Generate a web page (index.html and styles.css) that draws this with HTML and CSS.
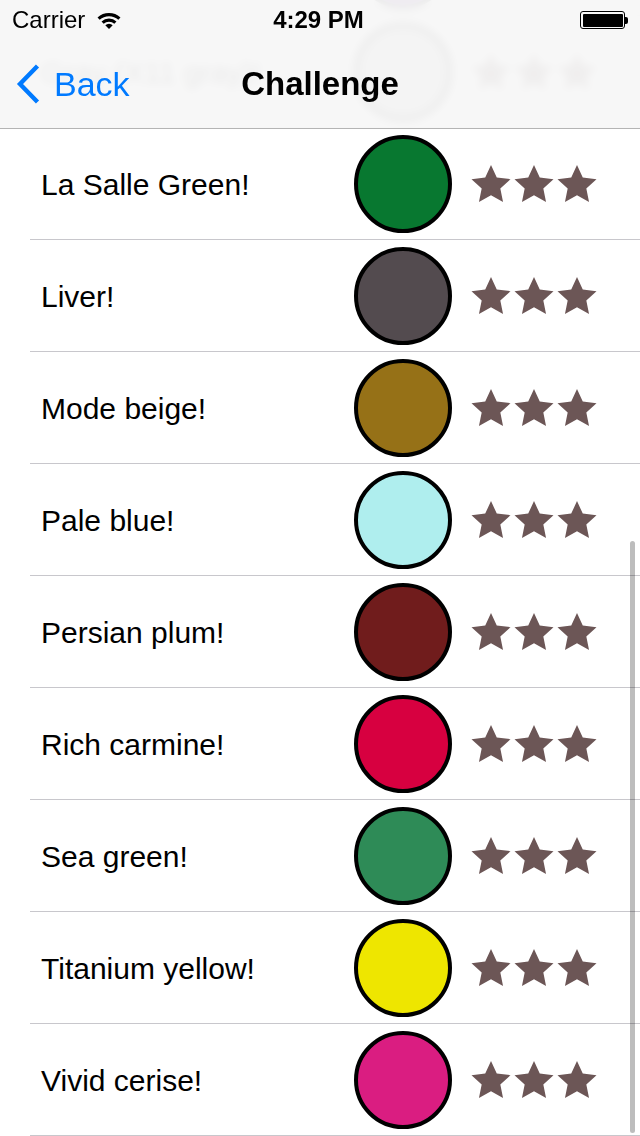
FILE: index.html
```html
<!DOCTYPE html>
<html>
<head>
<meta charset="utf-8">
<link rel="stylesheet" href="styles.css">
</head>
<body>
<svg class="defs" width="0" height="0">
  <symbol id="star" viewBox="0 0 40 38">
    <polygon points="20,0 25.76,12.57 39.5,14.17 29.32,23.53 32.05,37.08 20,30.3 7.95,37.08 10.68,23.53 0.5,14.17 14.24,12.57"/>
  </symbol>
</svg>
<div class="screen">
  <div class="list">
    <div class="row"><div class="row-inner"><span class="name"></span><span class="swatch" style="background:#6f2da8"></span><span class="stars"><svg class="star"><use href="#star"/></svg><svg class="star"><use href="#star"/></svg><svg class="star"><use href="#star"/></svg></span></div></div>
    <div class="row"><div class="row-inner"><span class="name">Gray (X11 gray)!</span><span class="swatch" style="background:#bebebe"></span><span class="stars"><svg class="star"><use href="#star"/></svg><svg class="star"><use href="#star"/></svg><svg class="star"><use href="#star"/></svg></span></div></div>
    <div class="row"><div class="row-inner"><span class="name">La Salle Green!</span><span class="swatch" style="background:#087830"></span><span class="stars"><svg class="star"><use href="#star"/></svg><svg class="star"><use href="#star"/></svg><svg class="star"><use href="#star"/></svg></span></div></div>
    <div class="row"><div class="row-inner"><span class="name">Liver!</span><span class="swatch" style="background:#534b4f"></span><span class="stars"><svg class="star"><use href="#star"/></svg><svg class="star"><use href="#star"/></svg><svg class="star"><use href="#star"/></svg></span></div></div>
    <div class="row"><div class="row-inner"><span class="name">Mode beige!</span><span class="swatch" style="background:#967117"></span><span class="stars"><svg class="star"><use href="#star"/></svg><svg class="star"><use href="#star"/></svg><svg class="star"><use href="#star"/></svg></span></div></div>
    <div class="row"><div class="row-inner"><span class="name">Pale blue!</span><span class="swatch" style="background:#afeeee"></span><span class="stars"><svg class="star"><use href="#star"/></svg><svg class="star"><use href="#star"/></svg><svg class="star"><use href="#star"/></svg></span></div></div>
    <div class="row"><div class="row-inner"><span class="name">Persian plum!</span><span class="swatch" style="background:#701c1c"></span><span class="stars"><svg class="star"><use href="#star"/></svg><svg class="star"><use href="#star"/></svg><svg class="star"><use href="#star"/></svg></span></div></div>
    <div class="row"><div class="row-inner"><span class="name">Rich carmine!</span><span class="swatch" style="background:#d70040"></span><span class="stars"><svg class="star"><use href="#star"/></svg><svg class="star"><use href="#star"/></svg><svg class="star"><use href="#star"/></svg></span></div></div>
    <div class="row"><div class="row-inner"><span class="name">Sea green!</span><span class="swatch" style="background:#2e8b57"></span><span class="stars"><svg class="star"><use href="#star"/></svg><svg class="star"><use href="#star"/></svg><svg class="star"><use href="#star"/></svg></span></div></div>
    <div class="row"><div class="row-inner"><span class="name">Titanium yellow!</span><span class="swatch" style="background:#eee600"></span><span class="stars"><svg class="star"><use href="#star"/></svg><svg class="star"><use href="#star"/></svg><svg class="star"><use href="#star"/></svg></span></div></div>
    <div class="row"><div class="row-inner"><span class="name">Vivid cerise!</span><span class="swatch" style="background:#da1d81"></span><span class="stars"><svg class="star"><use href="#star"/></svg><svg class="star"><use href="#star"/></svg><svg class="star"><use href="#star"/></svg></span></div></div>
  </div>

  <header class="topbar">
    <div class="status">
      <div class="status-left">
        <span class="carrier">Carrier</span>
        <svg class="wifi" width="24" height="17" viewBox="0 0 24 17">
          <path d="M1.6 6.6 A15.5 15.5 0 0 1 22.4 6.6" fill="none" stroke="#000" stroke-width="3.2"/>
          <path d="M5.6 10.6 A9.5 9.5 0 0 1 18.4 10.6" fill="none" stroke="#000" stroke-width="3.2"/>
          <path d="M12 17 L8.3 13.3 A5.2 5.2 0 0 1 15.7 13.3 Z" fill="#000"/>
        </svg>
      </div>
      <span class="time">4:29 PM</span>
      <div class="status-right">
        <span class="battery"><span class="battery-fill"></span></span><span class="battery-nub"></span>
      </div>
    </div>
    <nav class="navbar">
      <div class="nav-left">
        <svg class="chevron" width="24" height="40" viewBox="0 0 24 40">
          <polyline points="21.5,2 4,20 21.5,38" fill="none" stroke="#007aff" stroke-width="4.4"/>
        </svg>
        <span class="back">Back</span>
      </div>
      <h1 class="title">Challenge</h1>
      <div class="nav-right"></div>
    </nav>
  </header>

  <div class="scroll-indicator"></div>
</div>
</body>
</html>
```
FILE: styles.css
```css
body {
  margin: 0;
  background: #fff;
  font-family: "Liberation Sans", Arial, Helvetica, sans-serif;
}

.defs {
  position: absolute;
  width: 0;
  height: 0;
}

.screen {
  position: relative;
  width: 640px;
  height: 1136px;
  overflow: hidden;
  background: #fff;
}

/* list, scrolled so that the third row starts under the nav bar */
.list {
  margin-top: -96px;
}

.row {
  padding-left: 30px;
}

.row-inner {
  display: flex;
  align-items: center;
  height: 111px;
  border-bottom: 1px solid #c8c7cc;
  padding-left: 11px;
  padding-right: 43px;
}

.name {
  flex: 1;
  font-size: 30px;
  line-height: 36px;
  padding-top: 3px;
  color: #000;
  white-space: nowrap;
}

.swatch {
  width: 98px;
  height: 98px;
  box-sizing: border-box;
  border: 4px solid #000;
  border-radius: 50%;
  margin-right: 19px;
  flex: none;
}

.stars {
  display: flex;
  gap: 3px;
  flex: none;
}

.star {
  width: 40px;
  height: 38px;
  display: block;
  fill: #6c5656;
}

/* translucent top bar */
.topbar {
  position: absolute;
  top: 0;
  left: 0;
  right: 0;
  height: 129px;
  box-sizing: border-box;
  border-bottom: 1px solid #b4b4b4;
  background: rgba(247, 247, 247, 0.95);
  backdrop-filter: blur(4px);
}

.status {
  height: 40px;
  display: grid;
  grid-template-columns: 1fr auto 1fr;
  align-items: center;
  padding: 0 12px;
  font-size: 24px;
  color: #000;
}

.status-left {
  display: flex;
  align-items: center;
  gap: 12px;
}

.wifi {
  display: block;
  margin-top: 1px;
}

.time {
  font-weight: bold;
  font-size: 24px;
  margin-right: 3px;
}

.status-right {
  display: flex;
  justify-content: flex-end;
  align-items: center;
}

.battery {
  width: 45px;
  height: 18px;
  box-sizing: border-box;
  border: 1.5px solid #000;
  border-radius: 3px;
  padding: 1.5px;
  display: flex;
}

.battery-fill {
  flex: 1;
  background: #000;
  border-radius: 1px;
}

.battery-nub {
  width: 3px;
  height: 7px;
  background: #000;
  border-radius: 0 2px 2px 0;
}

.navbar {
  height: 88px;
  display: grid;
  grid-template-columns: 1fr auto 1fr;
  align-items: center;
}

.nav-left {
  display: flex;
  align-items: center;
  padding-left: 16px;
  gap: 14px;
}

.chevron {
  display: block;
}

.back {
  font-size: 34px;
  color: #007aff;
}

.title {
  margin: 0;
  font-size: 33px;
  font-weight: bold;
  color: #000;
}

.scroll-indicator {
  position: absolute;
  top: 541px;
  right: 5px;
  width: 5px;
  height: 592px;
  border-radius: 3px;
  background: rgba(0, 0, 0, 0.26);
}
```
